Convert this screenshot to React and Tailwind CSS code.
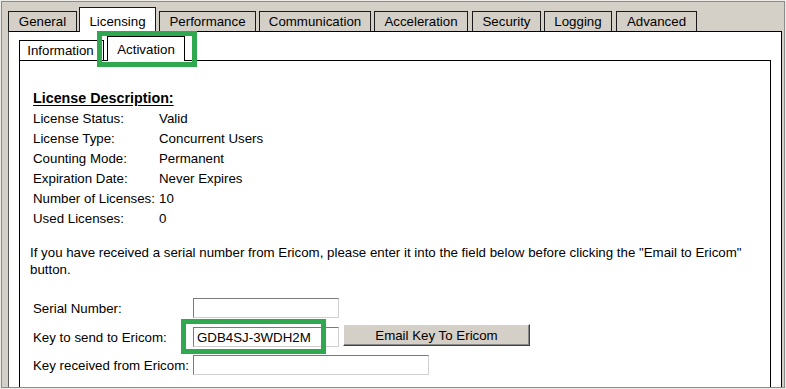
import React from "react";

const tabs = [
  { label: "General", cls: "w-[69px] mr-[2px]" },
  { label: "Licensing", cls: "w-[77px] mr-[3px]", selected: true },
  { label: "Performance", cls: "w-[97px] mr-[3px]" },
  { label: "Communication", cls: "w-[112px] mr-[3px]" },
  { label: "Acceleration", cls: "w-[94px] mr-[4px]" },
  { label: "Security", cls: "w-[69px] mr-[3px]" },
  { label: "Logging", cls: "w-[68px] mr-[4px]" },
  { label: "Advanced", cls: "w-[81px]" },
];

const rows = [
  ["License Status:", "Valid"],
  ["License Type:", "Concurrent Users"],
  ["Counting Mode:", "Permanent"],
  ["Expiration Date:", "Never Expires"],
  ["Number of Licenses:", "10"],
  ["Used Licenses:", "0"],
];

function Input({ cls, value }) {
  return (
    <div
      className={
        "h-[20px] bg-white border-t border-l border-t-[#7a7a7a] border-l-[#7a7a7a] border-b border-r border-b-[#d0d0d0] border-r-[#d0d0d0] pl-[3px] flex items-center leading-[15px] " +
        cls
      }
    >
      {value}
    </div>
  );
}

export default function App() {
  return (
    <div className="w-[786px] h-[389px] bg-[#ecebe7] p-px font-['Liberation_Sans',Arial,sans-serif] text-[13.3px] text-black relative overflow-hidden">
      <div className="h-full border border-[#8c8c8c] bg-[#d4d0c8] pl-[6px] pr-[2px] pt-[5px] flex flex-col overflow-hidden">
        {/* Outer tab row */}
        <div className="flex items-end h-[24px] shrink-0">
          {tabs.map((t) =>
            t.selected ? (
              <div
                key={t.label}
                className={
                  "relative z-10 h-[25px] -mb-px bg-white border border-b-0 border-[#1a1a1a] flex justify-center pt-[6px] leading-[15px] " +
                  t.cls
                }
              >
                {t.label}
              </div>
            ) : (
              <div
                key={t.label}
                className={
                  "h-[20px] bg-[#d4d0c8] border border-b-0 border-[#1a1a1a] flex items-center justify-center leading-[15px] " +
                  t.cls
                }
              >
                {t.label}
              </div>
            )
          )}
        </div>

        {/* Outer panel */}
        <div className="flex-1 min-h-0 bg-white border-t border-r border-l border-t-black border-r-black border-l-[#5a5a5a] pt-[4px] px-[10px] flex flex-col">
          {/* Sub tabs */}
          <div className="flex items-end h-[24px] shrink-0">
            <div className="w-[85px] h-[20px] mr-[3px] bg-white border-t border-l border-black border-r-[3px] [border-right-style:double] flex items-center justify-center leading-[15px]">
              Information
            </div>
            <div className="relative z-10 w-[78px] h-[25px] -mb-px bg-white border border-b-0 border-black flex justify-center pt-[5px] leading-[15px]">
              Activation
            </div>
          </div>

          {/* Inner panel */}
          <div className="flex-1 min-h-0 border-t border-l border-r border-black pt-[27px] pl-[10px]">
            <div className="pl-[3px] h-[20px] leading-[20px] font-bold text-[14.3px] underline underline-offset-2">
              License Description:
            </div>
            {rows.map(([k, v]) => (
              <div key={k} className="pl-[3px] flex h-[20px] items-center leading-[15px]">
                <div className="w-[126px] shrink-0">{k}</div>
                <div>{v}</div>
              </div>
            ))}

            <p className="mt-[16px] leading-[17px]">
              If you have received a serial number from Ericom, please enter it into the field below before clicking the "Email to Ericom"
              <br />
              button.
            </p>

            <div className="mt-[20px] pl-[3px]">
              <div className="flex items-center h-[20px]">
                <div className="w-[160px] shrink-0 leading-[15px]">Serial Number:</div>
                <Input cls="w-[146px]" value="" />
              </div>
              <div className="flex items-start mt-[6px]">
                <div className="w-[160px] shrink-0 mt-[3px] h-[20px] flex items-center leading-[15px]">
                  Key to send to Ericom:
                </div>
                <Input cls="w-[146px] mt-[3px]" value="GDB4SJ-3WDH2M" />
                <button className="ml-[4px] w-[187px] h-[22px] bg-[#d4d0c8] border-t border-l border-t-white border-l-white border-b border-r border-b-[#404040] border-r-[#404040] shadow-[inset_-1px_-1px_0_#8a8a8a] flex items-center justify-center leading-[15px] text-[13.3px]">
                  Email Key To Ericom
                </button>
              </div>
              <div className="flex items-center h-[20px] mt-[8px]">
                <div className="w-[160px] shrink-0 leading-[15px]">Key received from Ericom:</div>
                <Input cls="w-[236px]" value="" />
              </div>
            </div>
          </div>
        </div>
      </div>

      {/* Highlight boxes */}
      <div className="absolute left-[97px] top-[31px] w-[100px] h-[36px] border-[5px] border-[#2fa84f] z-20 pointer-events-none" />
      <div className="absolute left-[181px] top-[319px] w-[145px] h-[35px] border-[5px] border-[#2fa84f] z-20 pointer-events-none" />
    </div>
  );
}
